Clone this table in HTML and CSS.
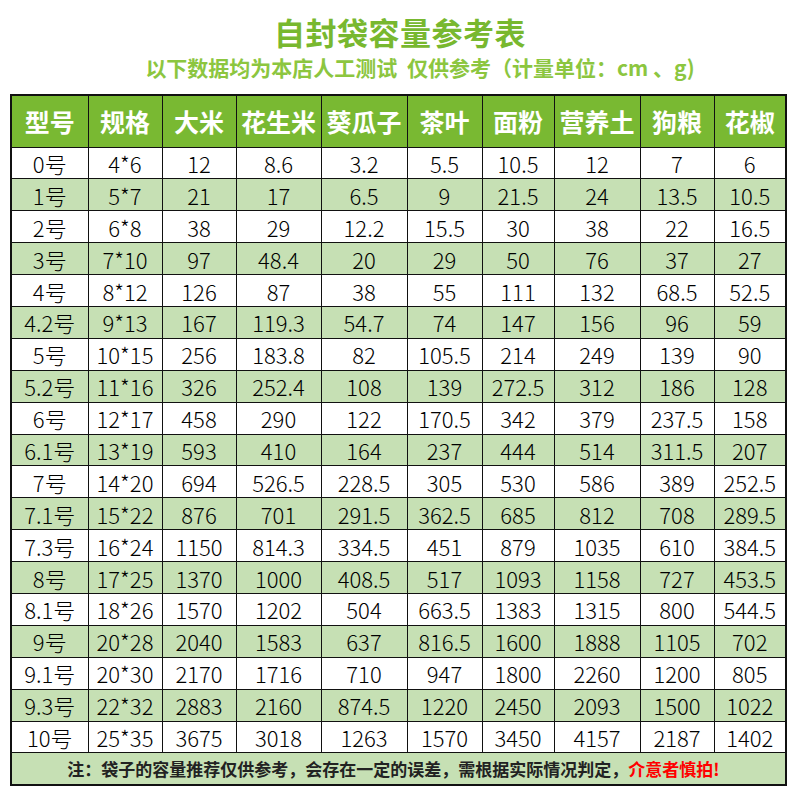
FILE: index.html
```html
<!DOCTYPE html>
<html lang="zh">
<head>
<meta charset="utf-8">
<title>自封袋容量参考表</title>
<link rel="stylesheet" href="styles.css">
</head>
<body>
<div class="page">
  <header class="head">
    <h1 class="title">自封袋容量参考表</h1>
    <p class="subtitle">以下数据均为本店人工测试&nbsp;&nbsp;仅供参考（计量单位：cm 、g)</p>
  </header>
  <table class="sheet">
    <colgroup>
      <col class="w1"><col class="w2"><col class="w3"><col class="w4"><col class="w5">
      <col class="w6"><col class="w7"><col class="w8"><col class="w9"><col class="w10">
    </colgroup>
    <thead>
      <tr class="hrow"><th>型号</th><th>规格</th><th>大米</th><th>花生米</th><th>葵瓜子</th><th>茶叶</th><th>面粉</th><th>营养土</th><th>狗粮</th><th>花椒</th></tr>
    </thead>
    <tbody>
      <tr><td>0号</td><td>4*6</td><td>12</td><td>8.6</td><td>3.2</td><td>5.5</td><td>10.5</td><td>12</td><td>7</td><td>6</td></tr>
      <tr class="alt"><td>1号</td><td>5*7</td><td>21</td><td>17</td><td>6.5</td><td>9</td><td>21.5</td><td>24</td><td>13.5</td><td>10.5</td></tr>
      <tr><td>2号</td><td>6*8</td><td>38</td><td>29</td><td>12.2</td><td>15.5</td><td>30</td><td>38</td><td>22</td><td>16.5</td></tr>
      <tr class="alt"><td>3号</td><td>7*10</td><td>97</td><td>48.4</td><td>20</td><td>29</td><td>50</td><td>76</td><td>37</td><td>27</td></tr>
      <tr><td>4号</td><td>8*12</td><td>126</td><td>87</td><td>38</td><td>55</td><td>111</td><td>132</td><td>68.5</td><td>52.5</td></tr>
      <tr class="alt"><td>4.2号</td><td>9*13</td><td>167</td><td>119.3</td><td>54.7</td><td>74</td><td>147</td><td>156</td><td>96</td><td>59</td></tr>
      <tr><td>5号</td><td>10*15</td><td>256</td><td>183.8</td><td>82</td><td>105.5</td><td>214</td><td>249</td><td>139</td><td>90</td></tr>
      <tr class="alt"><td>5.2号</td><td>11*16</td><td>326</td><td>252.4</td><td>108</td><td>139</td><td>272.5</td><td>312</td><td>186</td><td>128</td></tr>
      <tr><td>6号</td><td>12*17</td><td>458</td><td>290</td><td>122</td><td>170.5</td><td>342</td><td>379</td><td>237.5</td><td>158</td></tr>
      <tr class="alt"><td>6.1号</td><td>13*19</td><td>593</td><td>410</td><td>164</td><td>237</td><td>444</td><td>514</td><td>311.5</td><td>207</td></tr>
      <tr><td>7号</td><td>14*20</td><td>694</td><td>526.5</td><td>228.5</td><td>305</td><td>530</td><td>586</td><td>389</td><td>252.5</td></tr>
      <tr class="alt"><td>7.1号</td><td>15*22</td><td>876</td><td>701</td><td>291.5</td><td>362.5</td><td>685</td><td>812</td><td>708</td><td>289.5</td></tr>
      <tr><td>7.3号</td><td>16*24</td><td>1150</td><td>814.3</td><td>334.5</td><td>451</td><td>879</td><td>1035</td><td>610</td><td>384.5</td></tr>
      <tr class="alt"><td>8号</td><td>17*25</td><td>1370</td><td>1000</td><td>408.5</td><td>517</td><td>1093</td><td>1158</td><td>727</td><td>453.5</td></tr>
      <tr><td>8.1号</td><td>18*26</td><td>1570</td><td>1202</td><td>504</td><td>663.5</td><td>1383</td><td>1315</td><td>800</td><td>544.5</td></tr>
      <tr class="alt"><td>9号</td><td>20*28</td><td>2040</td><td>1583</td><td>637</td><td>816.5</td><td>1600</td><td>1888</td><td>1105</td><td>702</td></tr>
      <tr><td>9.1号</td><td>20*30</td><td>2170</td><td>1716</td><td>710</td><td>947</td><td>1800</td><td>2260</td><td>1200</td><td>805</td></tr>
      <tr class="alt"><td>9.3号</td><td>22*32</td><td>2883</td><td>2160</td><td>874.5</td><td>1220</td><td>2450</td><td>2093</td><td>1500</td><td>1022</td></tr>
      <tr><td>10号</td><td>25*35</td><td>3675</td><td>3018</td><td>1263</td><td>1570</td><td>3450</td><td>4157</td><td>2187</td><td>1402</td></tr>
    </tbody>
    <tfoot>
      <tr class="frow"><td colspan="10">注：袋子的容量推荐仅供参考，会存在一定的误差，需根据实际情况判定，<span class="warn">介意者慎拍!</span></td></tr>
    </tfoot>
  </table>
</div>
</body>
</html>
```
FILE: styles.css
```css
html, body {
  margin: 0;
  padding: 0;
  background: #ffffff;
}
body {
  font-family: "Noto Sans CJK SC", "Noto Sans", sans-serif;
  color: #000;
}
.page {
  width: 800px;
  height: 800px;
  padding-top: 13px;
  box-sizing: border-box;
}
.head {
  height: 81px;
  display: flex;
  flex-direction: column;
  align-items: center;
}
.title {
  margin: 0;
  font-size: 31px;
  line-height: 38px;
  font-weight: 700;
  letter-spacing: 0.5px;
  color: #78b82f;
}
.subtitle {
  margin: 0;
  padding-left: 40px;
  font-size: 21px;
  line-height: 32px;
  font-weight: 700;
  color: #8cc63f;
  white-space: nowrap;
}
.sheet {
  margin-left: 10px;
  width: 777px;
  border-collapse: collapse;
  table-layout: fixed;
  border: 2px solid #111;
}
.w1 { width: 77px; }
.w2 { width: 74px; }
.w3 { width: 74px; }
.w4 { width: 85px; }
.w5 { width: 86px; }
.w6 { width: 75px; }
.w7 { width: 72px; }
.w8 { width: 86px; }
.w9 { width: 74px; }
.w10 { width: 72px; }
.sheet th, .sheet td {
  border: 1px solid #111;
  padding: 0;
  text-align: center;
  white-space: nowrap;
  overflow: hidden;
}
.hrow th {
  height: 50.5px;
  background: #79b932;
  color: #fff;
  font-size: 25px;
  font-weight: 700;
  line-height: 30px;
}
.sheet tbody td {
  height: 30.9px;
  font-size: 22px;
  font-weight: 300;
  line-height: 26px;
}
.alt td {
  background: #c6e0b4;
}
.frow td {
  height: 31px;
  padding-right: 10px;
  background: #c6e0b4;
  font-size: 17px;
  font-weight: 700;
  line-height: 24px;
  color: #222;
}
.warn {
  color: #ff0000;
}
```
